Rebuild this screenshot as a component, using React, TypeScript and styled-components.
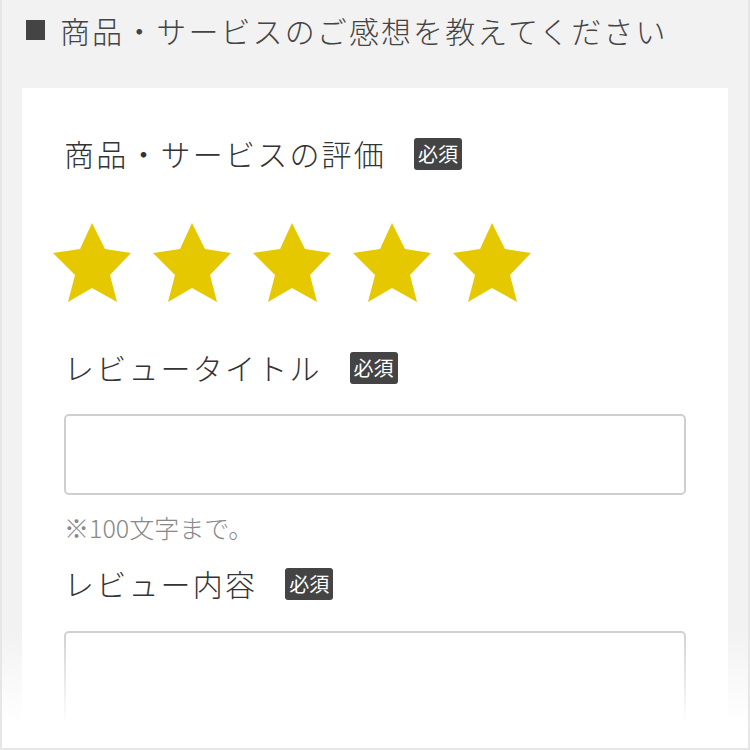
import React from "react";
import styled, { createGlobalStyle } from "styled-components";

const GlobalStyle = createGlobalStyle`
  html, body {
    margin: 0;
    padding: 0;
    background: #f2f2f2;
  }
  body {
    font-family: "Noto Sans CJK JP", "Noto Sans", sans-serif;
    color: #333;
  }
`;

const Page = styled.div`
  position: relative;
  box-sizing: border-box;
  width: 750px;
  height: 750px;
  overflow: hidden;
  padding: 0 20px;
  background: #f2f2f2;
  border: 2px solid #e6e6e6;
  border-top: none;
`;

const Heading = styled.h2`
  display: flex;
  align-items: center;
  margin: 0;
  height: 60px;
  padding-left: 4px;
  font-size: 30px;
  font-weight: 300;
  letter-spacing: 2.1px;
  color: #444;
`;

const HeadMark = styled.span`
  display: inline-block;
  width: 19px;
  height: 20px;
  margin-right: 15px;
  background: #444;
`;

const Card = styled.div`
  margin-top: 28px;
  padding: 42px 42px 0;
  background: #fff;
  min-height: 700px;
`;

const FieldHead = styled.div<{ $top?: number }>`
  display: flex;
  align-items: center;
  height: 48px;
  margin-top: ${(p) => p.$top ?? 0}px;
`;

const Label = styled.span`
  font-size: 30px;
  font-weight: 300;
  letter-spacing: 2.2px;
  color: #333;
  margin-right: 28px;
  margin-top: -3px;
`;

const Required = styled.span`
  display: inline-flex;
  align-items: center;
  justify-content: center;
  width: 48px;
  height: 32px;
  border-radius: 3px;
  background: #444;
  color: #fff;
  font-size: 20px;
  line-height: 1;
`;

const Stars = styled.div`
  display: flex;
  gap: 22px;
  margin: 44px 0 0 -11px;
`;

const Input = styled.div`
  box-sizing: border-box;
  height: 81px;
  margin-top: 22px;
  border: 2px solid #cfcfcf;
  border-radius: 5px;
  background: #fff;
`;

const TextArea = styled(Input)`
  height: 160px;
  margin-top: 23px;
`;

const Note = styled.div`
  margin-top: 14px;
  height: 36px;
  line-height: 36px;
  font-size: 25px;
  font-weight: 300;
  color: #888;
`;

const Fade = styled.div`
  position: absolute;
  left: 0;
  right: 0;
  bottom: 0;
  height: 120px;
  background: linear-gradient(to bottom, rgba(255, 255, 255, 0) 0%, #fff 80%);
  pointer-events: none;
`;

const Star = () => (
  <svg width="78" height="80" viewBox="0 0 78 80">
    <polygon
      fill="#e6c800"
      points="39,1 52,27 78,31 57,53 64,80 39,66 15,80 22,53 0,31 27,27"
    />
  </svg>
);

const Field: React.FC<{ label: string; top?: number }> = ({ label, top }) => (
  <FieldHead $top={top}>
    <Label>{label}</Label>
    <Required>必須</Required>
  </FieldHead>
);

export default function App() {
  return (
    <>
      <GlobalStyle />
      <Page>
        <Heading>
          <HeadMark />
          商品・サービスのご感想を教えてください
        </Heading>
        <Card>
          <Field label="商品・サービスの評価" />
          <Stars>
            {[0, 1, 2, 3, 4].map((i) => (
              <Star key={i} />
            ))}
          </Stars>
          <Field label="レビュータイトル" top={42} />
          <Input />
          <Note>※100文字まで。</Note>
          <Field label="レビュー内容" top={15} />
          <TextArea />
        </Card>
        <Fade />
      </Page>
    </>
  );
}
